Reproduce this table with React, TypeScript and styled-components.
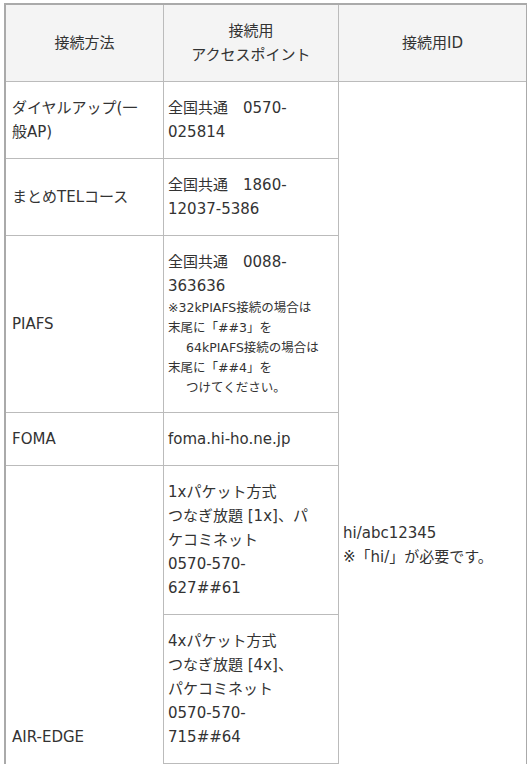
import React from "react";
import styled, { createGlobalStyle } from "styled-components";

const Global = createGlobalStyle`
  html, body { background: #ffffff; }
  body {
    margin: 3px 4px;
    font-family: "DejaVu Sans", "Noto Sans CJK JP", sans-serif;
    color: #333333;
  }
`;

const Table = styled.table`
  border-collapse: separate;
  border-spacing: 0;
  table-layout: fixed;
  width: 524px;
  border: 2px solid #aaaaaa;
  font-size: 15px;
  line-height: 24px;
`;

const Col = styled.col<{ $w: number }>`
  width: ${(p) => p.$w}px;
`;

const HeadCell = styled.th<{ $last?: boolean }>`
  background: #f4f4f4;
  font-weight: normal;
  text-align: center;
  vertical-align: middle;
  padding: 14px 6px;
  border-bottom: 1px solid #bbbbbb;
  border-right: ${(p) => (p.$last ? "none" : "1px solid #bbbbbb")};
`;

const Cell = styled.td<{ $last?: boolean; $pl?: number }>`
  text-align: left;
  vertical-align: middle;
  padding: 14px 6px 14px ${(p) => p.$pl ?? 6}px;
  border-bottom: 1px solid #bbbbbb;
  border-right: ${(p) => (p.$last ? "none" : "1px solid #bbbbbb")};
  white-space: nowrap;
`;

const Line = styled.div``;

const Note = styled.div<{ $indent?: boolean }>`
  font-size: 12.5px;
  line-height: 20px;
  padding-left: ${(p) => (p.$indent ? "18px" : "0")};
`;

export default function App() {
  return (
    <>
      <Global />
      <Table>
        <colgroup>
          <Col $w={158} />
          <Col $w={175} />
          <Col $w={187} />
        </colgroup>
        <thead>
          <tr>
            <HeadCell>接続方法</HeadCell>
            <HeadCell>
              接続用
              <br />
              アクセスポイント
            </HeadCell>
            <HeadCell $last>接続用ID</HeadCell>
          </tr>
        </thead>
        <tbody>
          <tr>
            <Cell>
              <Line>ダイヤルアップ(一</Line>
              <Line>般AP)</Line>
            </Cell>
            <Cell $pl={4}>
              <Line>全国共通　0570-</Line>
              <Line>025814</Line>
            </Cell>
            <Cell $last $pl={4} rowSpan={8}>
              <Line>hi/abc12345</Line>
              <Line>※「hi/」が必要です。</Line>
            </Cell>
          </tr>
          <tr>
            <Cell>まとめTELコース</Cell>
            <Cell $pl={4}>
              <Line>全国共通　1860-</Line>
              <Line>12037-5386</Line>
            </Cell>
          </tr>
          <tr>
            <Cell>PIAFS</Cell>
            <Cell $pl={4}>
              <Line>全国共通　0088-</Line>
              <Line>363636</Line>
              <Note>※32kPIAFS接続の場合は</Note>
              <Note>末尾に「##3」を</Note>
              <Note $indent>64kPIAFS接続の場合は</Note>
              <Note>末尾に「##4」を</Note>
              <Note $indent>つけてください。</Note>
            </Cell>
          </tr>
          <tr>
            <Cell>FOMA</Cell>
            <Cell $pl={4}>foma.hi-ho.ne.jp</Cell>
          </tr>
          <tr>
            <Cell rowSpan={3}>AIR-EDGE</Cell>
            <Cell $pl={4}>
              <Line>1xパケット方式</Line>
              <Line>つなぎ放題 [1x]、パ</Line>
              <Line>ケコミネット</Line>
              <Line>0570-570-</Line>
              <Line>627##61</Line>
            </Cell>
          </tr>
          <tr>
            <Cell $pl={4}>
              <Line>4xパケット方式</Line>
              <Line>つなぎ放題 [4x]、</Line>
              <Line>パケコミネット</Line>
              <Line>0570-570-</Line>
              <Line>715##64</Line>
            </Cell>
          </tr>
          <tr>
            <Cell $pl={4}>
              <Line>8xパケット方式</Line>
              <Line>つなぎ放題 [8x]、</Line>
              <Line>パケコミネット</Line>
              <Line>0570-570-</Line>
              <Line>755##68</Line>
              <Line>※8x接続には</Line>
              <Line>対応端末が</Line>
              <Line>必要です。</Line>
              <Line>　</Line>
            </Cell>
          </tr>
        </tbody>
      </Table>
    </>
  );
}
